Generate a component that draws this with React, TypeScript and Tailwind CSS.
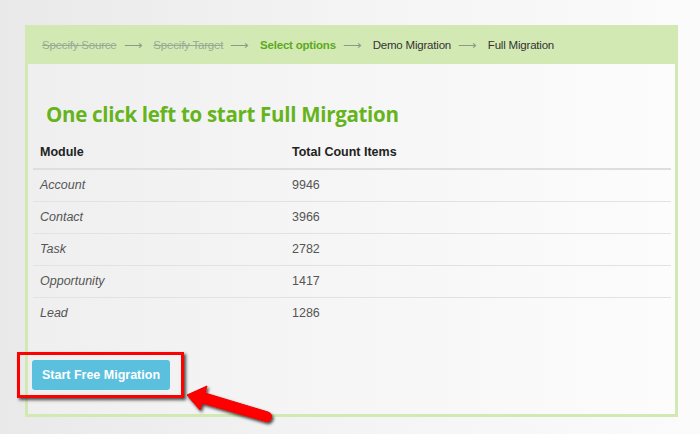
import React from "react";

const steps = [
  { label: "Specify Source", state: "done" },
  { label: "Specify Target", state: "done" },
  { label: "Select options", state: "active" },
  { label: "Demo Migration", state: "todo" },
  { label: "Full Migration", state: "todo" },
];

const rows = [
  { module: "Account", count: 9946 },
  { module: "Contact", count: 3966 },
  { module: "Task", count: 2782 },
  { module: "Opportunity", count: 1417 },
  { module: "Lead", count: 1286 },
];

function Arrow() {
  return (
    <svg
      width="200"
      height="60"
      viewBox="0 0 200 60"
      className="absolute left-[180px] top-[382px] overflow-visible"
    >
      <defs>
        <filter id="sh" x="-20%" y="-40%" width="140%" height="180%">
          <feDropShadow dx="1.5" dy="2" stdDeviation="1.5" floodColor="#000" floodOpacity="0.75" />
        </filter>
      </defs>
      <g filter="url(#sh)">
        <path
          d="M7 13 L27 4 L25 11 L88 30 Q93 32 91 37 Q89 41 84 39 L22 21 L20 28 Z"
          fill="#f00"
          stroke="#e00"
          strokeWidth="1"
          strokeLinejoin="round"
        />
      </g>
    </svg>
  );
}

export default function App() {
  return (
    <div className="relative w-[700px] h-[434px] overflow-hidden bg-gradient-to-r from-[#e9e9e9] via-[#f4f4f4] to-[#fbfbfb] font-['Liberation_Sans',Arial,sans-serif] pt-[25px] pl-[25px]">
      {/* panel */}
      <div className="w-[653px] h-[392px] border-[3px] border-[#d3e9b4] bg-gradient-to-r from-[#efefef] via-[#f6f6f6] to-[#fcfcfc] flex flex-col">
        {/* steps */}
        <div className="-mx-[3px] -mt-[3px] h-[39px] pt-[2px] bg-[#d3e9b4] flex items-center pl-[17px] text-[11.5px] tracking-[-0.2px]">
          {steps.map((s, i) => (
            <React.Fragment key={s.label}>
              <span
                className={
                  s.state === "done"
                    ? "text-[#9aa994] line-through"
                    : s.state === "active"
                    ? "text-[#5ca91c] font-bold"
                    : "text-[#333]"
                }
              >
                {s.label}
              </span>
              {i < steps.length - 1 && (
                <span className="ml-[7px] mr-[11px] text-[#8a9a84] text-[13px] leading-none">⟶</span>
              )}
            </React.Fragment>
          ))}
        </div>

        <div className="px-[5px]">
          <h1 className="mt-[37px] ml-[13px] text-[20.5px] leading-[26px] font-bold text-[#65b41c] font-['Open_Sans',sans-serif] tracking-[-0.3px]">
            One click left to start Full Mirgation
          </h1>

          <table className="mt-[10px] w-[638px] text-[12.5px] text-[#555] border-collapse">
            <thead>
              <tr className="border-b-2 border-[#dedede]">
                <th className="text-left font-bold text-[#222] pl-[7px] h-[32px] w-[259px]">Module</th>
                <th className="text-left font-bold text-[#222]">Total Count Items</th>
              </tr>
            </thead>
            <tbody>
              {rows.map((r, i) => (
                <tr key={r.module} className={i < rows.length - 1 ? "border-b border-[#e2e2e2]" : ""}>
                  <td className="italic pl-[7px] h-[32px]">{r.module}</td>
                  <td>{r.count}</td>
                </tr>
              ))}
            </tbody>
          </table>
        </div>
      </div>

      {/* highlighted button */}
      <div className="absolute left-[17px] top-[352px] w-[167px] h-[46px] border-[3px] border-[#f00] shadow-[2px_2px_3px_rgba(0,0,0,0.7)] flex items-center pl-[12px]">
        <button className="w-[138px] h-[30px] rounded-[3px] bg-[#5bc0de] text-white text-[12.5px] font-bold">
          Start Free Migration
        </button>
      </div>

      <Arrow />
    </div>
  );
}
